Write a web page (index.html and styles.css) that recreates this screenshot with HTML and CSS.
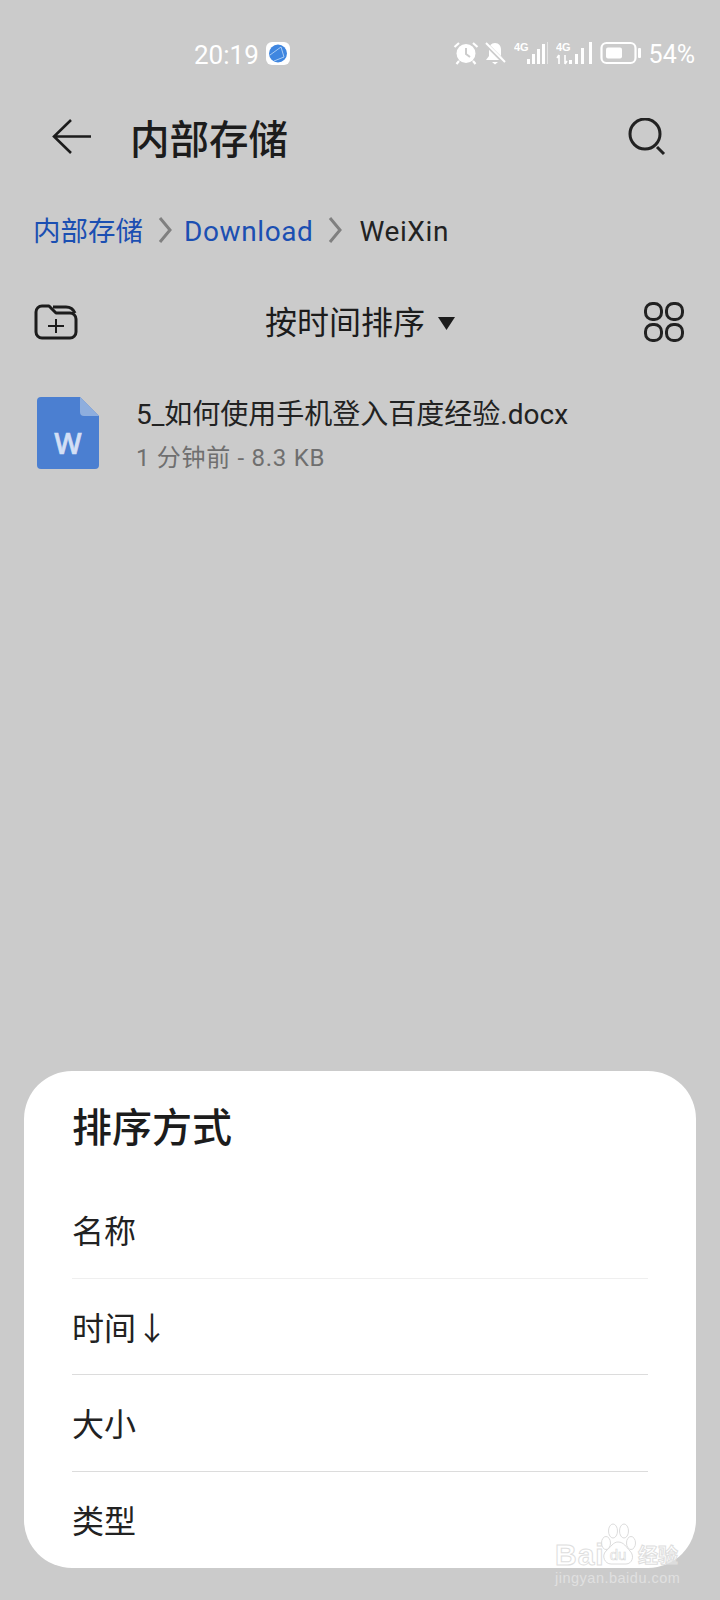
FILE: index.html
```html
<!DOCTYPE html>
<html lang="zh-CN">
<head>
<meta charset="utf-8">
<title>内部存储</title>
<link rel="stylesheet" href="styles.css">
</head>
<body>
<div class="page">
  <div class="status">
    <span class="time">20:19</span>
    <svg class="app-badge" width="24" height="23" viewBox="0 0 24 23"><rect width="24" height="23" rx="6" fill="#fff"/><circle cx="12" cy="11.500" r="9" fill="#3f86e0"/><path d="M4 13 15 5l3 10-10 4" fill="none" stroke="#a9ccf4" stroke-width="1"/></svg>
    <div class="status-right">
      <svg width="26" height="24" viewBox="0 0 26 24"><circle cx="13" cy="12.500" r="9.500" fill="#fff"/><path d="M13 7v6l4 3" fill="none" stroke="#ccc" stroke-width="2"/><path d="M1.500 6 6 2M24.500 6 20 2M6 20l-2.500 3M20 20l2.500 3" stroke="#fff" stroke-width="2.200" fill="none"/></svg>
      <svg width="22" height="24" viewBox="0 0 22 24"><path d="M11 2c-4 0-6 3-6 7v6l-3 4h18l-3-4V9c0-4-2-7-6-7zM8 21h6l-3 2.500z" fill="#fff"/><path d="M1 2 21 22" stroke="#ccc" stroke-width="4"/><path d="M2 2 21 21" stroke="#fff" stroke-width="2"/></svg>
      <svg class="signal" width="34" height="24" viewBox="0 0 34 24"><text x="0" y="10" class="net">4G</text><rect x="13" y="18" width="3" height="5" fill="#fff"/><rect x="18" y="13" width="3" height="10" fill="#fff"/><rect x="23" y="8" width="3" height="15" fill="#fff"/><rect x="28" y="3" width="3" height="20" fill="#fff"/><rect x="33" y="1" width="1" height="22" fill="#e4e4e4"/></svg>
      <svg class="signal" width="37" height="24" viewBox="0 0 37 24"><text x="0" y="10" class="net">4G</text><path d="M3 14v9M3 14l-2 3M9 14v9M9 23l2-3" stroke="#fff" stroke-width="1.600" fill="none"/><rect x="13" y="19" width="3" height="4" fill="#fff"/><rect x="19" y="13" width="3" height="10" fill="#fff"/><rect x="25" y="7" width="3" height="16" fill="#fff"/><rect x="33" y="1" width="3" height="22" fill="#fff"/></svg>
      <svg width="43" height="24" viewBox="0 0 43 24"><rect x="3.500" y="2" width="34" height="20" rx="5" fill="none" stroke="#fff" stroke-width="2.200"/><rect x="8" y="6.500" width="16" height="11" rx="2" fill="#fff"/><rect x="40" y="7" width="3" height="10" rx="1" fill="#fff"/></svg>
      <span class="pct">54%</span>
    </div>
  </div>

  <header class="appbar">
    <svg class="back" width="40" height="36" viewBox="0 0 40 36"><path d="M19 1 2 17.500 19 34M2 17.500h37" fill="none" stroke="#1c1c1c" stroke-width="2.600"/></svg>
    <h1 class="title">内部存储</h1>
    <svg class="search" width="38" height="38" viewBox="0 0 38 38"><circle cx="17" cy="16" r="15" fill="none" stroke="#222" stroke-width="3"/><path d="M29 29l7 7" stroke="#222" stroke-width="3"/></svg>
  </header>

  <nav class="crumbs">
    <span class="crumb-link crumb-cjk">内部存储</span>
    <svg class="chev" width="14" height="28" viewBox="0 0 14 28"><path d="M2 2l10 12L2 26" fill="none" stroke="#808080" stroke-width="3"/></svg>
    <span class="crumb-link">Download</span>
    <svg class="chev" width="14" height="28" viewBox="0 0 14 28"><path d="M2 2l10 12L2 26" fill="none" stroke="#808080" stroke-width="3"/></svg>
    <span class="crumb-now">WeiXin</span>
  </nav>

  <div class="toolbar">
    <svg width="44" height="36" viewBox="0 0 44 36"><path d="M2 8a6 6 0 0 1 6-6h7l7 7h14a6 6 0 0 1 6 6v13a6 6 0 0 1-6 6H8a6 6 0 0 1-6-6z" fill="none" stroke="#1c1c1c" stroke-width="3" stroke-linejoin="round"/><path d="M19 3h13a10 10 0 0 1 9 6" fill="none" stroke="#1c1c1c" stroke-width="3"/><path d="M14 22h16M22 15v14" stroke="#1c1c1c" stroke-width="2"/></svg>
    <div class="sort">
      <span class="sort-label">按时间排序</span>
      <svg class="sort-caret" width="17" height="13" viewBox="0 0 17 13"><path d="M0 0h17l-8.500 13z" fill="#1c1c1c"/></svg>
    </div>
    <svg width="40" height="40" viewBox="0 0 40 40"><g fill="none" stroke="#222" stroke-width="3"><rect x="1.500" y="1.500" width="16" height="16" rx="7"/><rect x="22.500" y="1.500" width="16" height="16" rx="7"/><rect x="1.500" y="22.500" width="16" height="16" rx="7"/><rect x="22.500" y="22.500" width="16" height="16" rx="7"/></g></svg>
  </div>

  <div class="file">
    <svg width="62" height="72" viewBox="0 0 62 72"><path d="M4 0h39l19 19v49a4 4 0 0 1-4 4H4a4 4 0 0 1-4-4V4a4 4 0 0 1 4-4z" fill="#4b7fd1"/><path d="M43 0l19 19H47a4 4 0 0 1-4-4z" fill="#8eaede"/><text x="31" y="57" text-anchor="middle" class="w">W</text></svg>
    <div class="file-text">
      <div class="file-name">5_如何使用手机登入百度经验.docx</div>
      <div class="file-meta">1 分钟前 - 8.3 KB</div>
    </div>
  </div>

  <section class="sheet">
    <h2 class="sheet-title">排序方式</h2>
    <div class="option option-soft">名称</div>
    <div class="option">时间↓</div>
    <div class="option">大小</div>
    <div class="option option-last">类型</div>
  </section>

  <div class="mark">
    <div class="mark-top">
      <span class="mark-word">Bai</span>
      <svg width="36" height="44" viewBox="0 0 36 44"><g fill="rgba(255,255,255,.35)" stroke="#dcdcdc" stroke-width="1"><ellipse cx="6" cy="20" rx="4.500" ry="6.500"/><ellipse cx="13" cy="8" rx="4.500" ry="7"/><ellipse cx="24" cy="8" rx="4.500" ry="7"/><ellipse cx="31" cy="20" rx="4.500" ry="6.500"/><path d="M18 19c-5 0-7 5-12 9-5 5-1 13 5 13h15c6 0 9-8 4-13-4-4-6-9-12-9z"/></g><text x="18" y="37" text-anchor="middle" class="mark-du">du</text></svg>
      <span class="mark-word mark-cn">经验</span>
    </div>
    <div class="mark-url">jingyan.baidu.com</div>
  </div>
</div>
</body>
</html>
```

FILE: styles.css
```css
* { box-sizing: border-box; }
html, body { margin: 0; padding: 0; }
body { background: #cbcbcb; font-family: Roboto, "Noto Sans CJK SC", sans-serif; color: #1c1c1c; }
.page { position: relative; width: 720px; height: 1600px; overflow: hidden; display: flex; flex-direction: column; background: #cbcbcb; }

.status { display: flex; align-items: center; height: 24px; margin-top: 41px; padding: 0 25px 0 194px; color: #fff; }
.time { font-size: 26px; font-weight: 400; line-height: 24px; padding-top: 3px; width: 72px; }
.app-badge { display: block; }
.status-right { margin-left: auto; display: flex; align-items: center; gap: 5px; }
.status-right svg { display: block; }
.signal { margin-left: 3px; }
.net { font: 700 11px "Liberation Sans Narrow", "Liberation Sans", sans-serif; fill: #fff; }
.pct { font-size: 25px; font-weight: 400; line-height: 24px; padding-top: 3px; margin-left: 3px; }

.appbar { display: flex; align-items: center; height: 72px; margin-top: 36px; padding: 0 54px 0 52px; }
.title { margin: 0 0 0 38px; font: 500 39.500px/72px "Noto Sans CJK SC", sans-serif; color: #1c1c1c; flex: 1; }
.back, .search { display: block; }

.crumbs { display: flex; align-items: center; height: 40px; margin-top: 37px; padding-left: 33px; font-size: 28px; letter-spacing: .6px; }
.crumb-link { color: #1b4fb2; line-height: 40px; padding-top: 4px; }
.crumb-cjk { font-size: 27.500px; letter-spacing: 0; }
.crumb-now { color: #222; line-height: 40px; padding-top: 4px; margin-left: 5px; }
.chev { margin: 0 12px 0 15px; display: block; }

.toolbar { display: flex; align-items: center; justify-content: space-between; height: 44px; margin-top: 50px; padding: 0 36px 0 34px; }
.sort { display: flex; align-items: center; gap: 13px; font: 400 32px/44px "Noto Sans CJK SC", sans-serif; margin-right: 2px; }
.sort-label { padding-bottom: 4px; }
.sort-caret { margin-top: 2px; }

.file { display: flex; align-items: flex-start; margin-top: 53px; padding-left: 37px; }
.file svg { display: block; flex: none; }
.w { font: 600 29px "Open Sans", sans-serif; fill: #d3dff5; stroke: #d3dff5; stroke-width: .6px; }
.file-text { margin-left: 37px; }
.file-name { font-size: 28px; line-height: 36px; color: #222; }
.file-meta { font-size: 24px; line-height: 32px; margin-top: 9px; color: #6f6f6f; letter-spacing: .7px; }

.sheet { margin: auto 24px 32px; padding: 0 48px; background: #fff; border-radius: 48px; }
.sheet-title { margin: 0; height: 111px; padding-bottom: 3px; display: flex; align-items: center; font: 500 40px/56px "Noto Sans CJK SC", sans-serif; color: #1c1c1c; }
.option { height: 96.500px; padding-bottom: 1px; display: flex; align-items: center; font: 400 32px/44px "Noto Sans CJK SC", sans-serif; color: #222; border-bottom: 1.500px solid #dcdcdc; }
.option-soft { border-bottom-color: #efefef; }
.option-last { border-bottom: 0; }

.mark { position: absolute; left: 555px; top: 1523px; width: 130px; }
.mark-top { display: flex; align-items: flex-end; height: 44px; }
.mark-word { font: 700 30px/24px "Liberation Sans", sans-serif; color: rgba(255,255,255,.35); -webkit-text-stroke: 1px #dedede; width: 45px; letter-spacing: 1px; }
.mark-cn { font: 700 20px/24px "Noto Sans CJK SC", sans-serif; width: auto; letter-spacing: 0; margin-left: 2px; }
.mark-du { font: 400 15px "Liberation Sans", sans-serif; fill: none; stroke: #d8d8d8; stroke-width: .6; }
.mark-url { font: 400 14.500px/16px "Liberation Sans", sans-serif; letter-spacing: .5px; color: #e0e0e0; margin-top: 3px; white-space: nowrap; }
```
